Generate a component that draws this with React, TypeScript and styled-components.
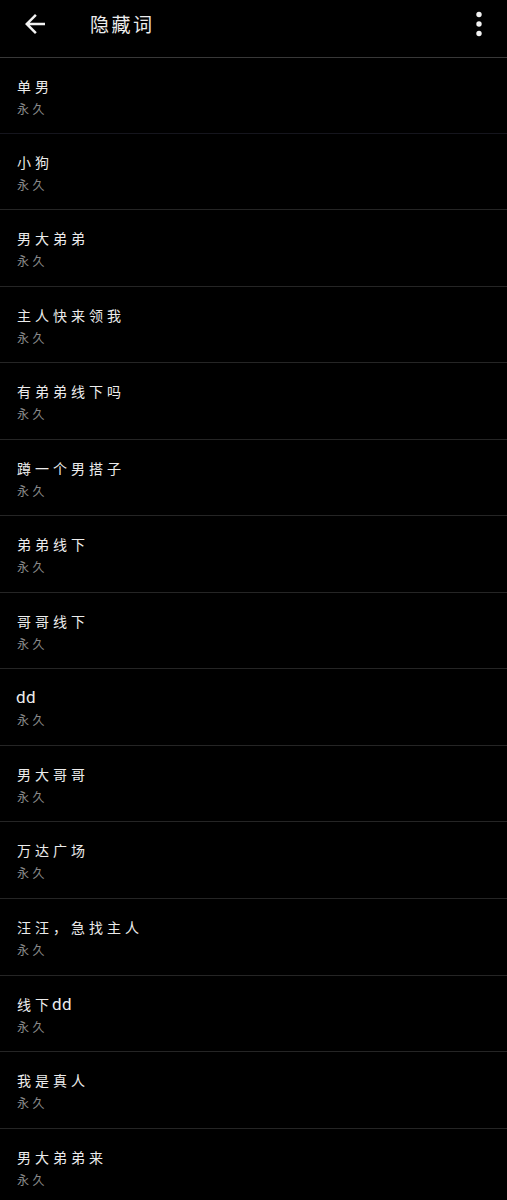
import styled, { createGlobalStyle } from 'styled-components';

const GlobalStyle = createGlobalStyle`
  html, body {
    margin: 0;
    padding: 0;
    background: #000;
  }
  body {
    font-family: "Noto Sans CJK SC", "Noto Sans", sans-serif;
    -webkit-font-smoothing: antialiased;
  }
`;

interface Word {
  text: string;
  expiry: string;
}

const words: Word[] = [
  { text: '单男', expiry: '永久' },
  { text: '小狗', expiry: '永久' },
  { text: '男大弟弟', expiry: '永久' },
  { text: '主人快来领我', expiry: '永久' },
  { text: '有弟弟线下吗', expiry: '永久' },
  { text: '蹲一个男搭子', expiry: '永久' },
  { text: '弟弟线下', expiry: '永久' },
  { text: '哥哥线下', expiry: '永久' },
  { text: 'dd', expiry: '永久' },
  { text: '男大哥哥', expiry: '永久' },
  { text: '万达广场', expiry: '永久' },
  { text: '汪汪，急找主人', expiry: '永久' },
  { text: '线下dd', expiry: '永久' },
  { text: '我是真人', expiry: '永久' },
  { text: '男大弟弟来', expiry: '永久' },
];

function BackIcon() {
  return (
    <svg width="30" height="30" viewBox="0 0 24 24" fill="#f2f2f2">
      <path d="M20 11H7.83l5.59-5.59L12 4l-8 8 8 8 1.41-1.41L7.83 13H20v-2z" />
    </svg>
  );
}

function MoreIcon() {
  return (
    <svg width="12" height="30" viewBox="0 0 12 30" fill="#f2f2f2">
      <circle cx="6" cy="5.5" r="2.7" />
      <circle cx="6" cy="15" r="2.7" />
      <circle cx="6" cy="24.5" r="2.7" />
    </svg>
  );
}

// split latin runs out so they get the larger latin size
function renderTitle(text: string) {
  const parts = text.split(/([A-Za-z0-9]+)/).filter(p => p !== '');
  return parts.map((p, i) =>
    /^[A-Za-z0-9]+$/.test(p) ? <Latin key={i}>{p}</Latin> : <span key={i}>{p}</span>
  );
}

export default function App() {
  return (
    <>
      <GlobalStyle />
      <Page>
        <Header>
          <IconBtn aria-label="back">
            <BackIcon />
          </IconBtn>
          <Title>隐藏词</Title>
          <MoreBtn aria-label="more">
            <MoreIcon />
          </MoreBtn>
        </Header>
        <List>
          {words.map((w, i) => (
            <Row key={i} $first={i === 0}>
              <RowTitle>{renderTitle(w.text)}</RowTitle>
              <RowSub>{w.expiry}</RowSub>
            </Row>
          ))}
        </List>
      </Page>
    </>
  );
}

const Page = styled.div`
  width: 507px;
  min-height: 1200px;
  background: #000;
  color: #ececec;
`;

const Header = styled.header`
  display: flex;
  align-items: center;
  height: 47px;
  border-bottom: 1px solid #383838;
  padding: 0 22px 10px 20px;
`;

const IconBtn = styled.button`
  display: flex;
  align-items: center;
  justify-content: center;
  width: 30px;
  height: 30px;
  padding: 0;
  margin-top: 1px;
  background: transparent;
  border: none;
  cursor: pointer;
`;

const Title = styled.h1`
  margin: 0 0 0 40px;
  flex: 1;
  font-size: 19px;
  font-weight: 400;
  letter-spacing: 2.5px;
  color: #ececec;
  line-height: 26px;
`;

const MoreBtn = styled(IconBtn)`
  width: 12px;
`;

const List = styled.div`
  display: flex;
  flex-direction: column;
`;

const Row = styled.div<{ $first: boolean }>`
  display: flex;
  flex-direction: column;
  height: ${p => (p.$first ? '56.5px' : '57.55px')};
  padding: ${p => (p.$first ? '18px' : '18px')} 17px 0;
  border-bottom: 1px solid ${p => (p.$first ? '#15151d' : '#252525')};
`;

const RowTitle = styled.div`
  font-size: 14px;
  line-height: 20px;
  letter-spacing: 4px;
  color: #ececec;
  display: flex;
  align-items: baseline;
`;

const Latin = styled.span`
  font-family: Roboto, "Noto Sans", sans-serif;
  font-size: 17px;
  letter-spacing: 0.5px;
  margin-left: -1px;
`;

const RowSub = styled.div`
  margin-top: 5px;
  font-size: 12px;
  line-height: 16px;
  letter-spacing: 3.5px;
  color: #8a8a8a;
`;
